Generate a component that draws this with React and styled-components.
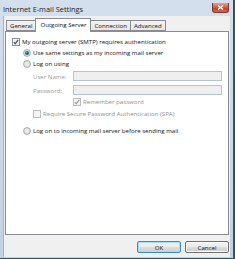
import React from "react";
import styled, { createGlobalStyle } from "styled-components";

const GlobalStyle = createGlobalStyle`
  html, body {
    margin: 0;
    padding: 0;
    background: #1d5c70;
  }
  body {
    width: 235px;
    height: 259px;
    overflow: hidden;
    font-family: "Open Sans", "Noto Sans", sans-serif;
  }
`;

const Window = styled.div`
  width: 233px;
  height: 258px;
  box-sizing: border-box;
  display: flex;
  flex-direction: column;
  background: linear-gradient(#d3dfec, #c3d2e3);
  padding: 0 3px 1px 4px;
`;

const TitleBar = styled.div`
  height: 16px;
  flex-shrink: 0;
  display: flex;
  align-items: center;
  justify-content: space-between;
  margin-left: -1px;
`;

const Title = styled.div`
  font-size: 7.4px;
  color: #1e1e1e;
  padding-top: 1px;
`;

const CloseBtn = styled.div`
  width: 17px;
  height: 10px;
  margin-right: 1px;
  margin-top: -1px;
  border: 1px solid #7a3a32;
  border-top: none;
  border-radius: 0 0 3px 3px;
  box-sizing: border-box;
  background: linear-gradient(#e3a393, #cc5a44 50%, #c13a22 51%, #d0674e);
  display: flex;
  align-items: center;
  justify-content: center;
`;

const Client = styled.div`
  flex: 1;
  background: #f0f0f0;
  display: flex;
  flex-direction: column;
  padding: 2px 1px 0 1px;
  border-left: 1px solid #a9b4c0;
  margin-left: -1px;
`;

const TabRow = styled.div`
  display: flex;
  align-items: flex-end;
  height: 13px;
  padding-left: 1px;
  position: relative;
  z-index: 1;
`;

const Tab = styled.div`
  height: ${(p) => (p.$active ? "14px" : "11px")};
  box-sizing: border-box;
  padding: 0 ${(p) => (p.$active ? "4px" : "3px")};
  margin: 0 ${(p) => (p.$active ? "-1px" : "0")};
  margin-bottom: ${(p) => (p.$active ? "-1px" : "0")};
  border: 1px solid #898c95;
  border-bottom: ${(p) => (p.$active ? "none" : "1px solid #898c95")};
  border-left: ${(p) => (p.$noLeft ? "none" : "1px solid #898c95")};
  background: ${(p) =>
    p.$active ? "#ffffff" : "linear-gradient(#f3f3f3, #e7e7e7)"};
  font-size: 6.1px;
  color: #111;
  display: flex;
  align-items: center;
  white-space: nowrap;
  position: relative;
  z-index: ${(p) => (p.$active ? 2 : 0)};
  padding-bottom: ${(p) => (p.$active ? "2px" : "0")};
`;

const Panel = styled.div`
  height: 204px;
  box-sizing: border-box;
  border: 1px solid #898c95;
  background: #ffffff;
  display: flex;
  flex-direction: column;
  padding: 5px 6px 0 6px;
`;

const Row = styled.div`
  display: flex;
  align-items: center;
  height: ${(p) => p.$h || 9}px;
  margin-top: ${(p) => p.$top || 0}px;
  margin-left: ${(p) => p.$indent || 0}px;
  font-size: 6.1px;
  color: ${(p) => (p.$disabled ? "#8f8f8f" : "#141414")};
  white-space: nowrap;
`;

const Mark = styled.svg`
  flex-shrink: 0;
  margin-right: 2px;
`;

const FieldLabel = styled.div`
  width: 40px;
  color: #9a9a9a;
`;

const Field = styled.div`
  width: 150px;
  height: 10px;
  box-sizing: border-box;
  border: 1px solid #b3c4d8;
  background: #efefef;
`;

const ButtonRow = styled.div`
  display: flex;
  justify-content: flex-end;
  gap: 4px;
  margin-top: 6px;
`;

const Button = styled.div`
  width: 44px;
  height: 12px;
  box-sizing: border-box;
  border: 1px solid ${(p) => (p.$default ? "#3a8fc6" : "#707070")};
  border-radius: 2px;
  background: linear-gradient(#f2f2f2, #ebebeb 50%, #dddddd 51%, #cfcfcf);
  box-shadow: inset 0 0 0 1px ${(p) => (p.$default ? "#a7dcf5" : "#fbfbfb")};
  font-size: 6.1px;
  color: #111;
  display: flex;
  align-items: center;
  justify-content: center;
`;

const CheckBox = ({ checked, disabled }) => (
  <Mark width="8" height="8" viewBox="0 0 8 8">
    <rect
      x="0.5"
      y="0.5"
      width="7"
      height="7"
      fill={disabled ? "#f4f4f4" : "#ffffff"}
      stroke={disabled ? "#bdbdbd" : "#8e8f8f"}
    />
    <rect
      x="1.5"
      y="1.5"
      width="5"
      height="5"
      fill={disabled ? "#f4f4f4" : "#e6e9ee"}
    />
    {checked && (
      <path
        d="M1.8 4.2 L3.2 5.8 L6.2 1.8"
        fill="none"
        stroke={disabled ? "#9a9a9a" : "#2b4d8c"}
        strokeWidth="1.1"
      />
    )}
  </Mark>
);

const Radio = ({ checked }) => (
  <Mark width="8" height="8" viewBox="0 0 8 8">
    <circle cx="4" cy="4" r="3.4" fill="#e8ebee" stroke="#8e8f8f" strokeWidth="0.8" />
    {checked && <circle cx="4" cy="4" r="2" fill="#1b5f80" />}
    {checked && <circle cx="3.5" cy="3.4" r="0.8" fill="#5fc0e0" />}
  </Mark>
);

export default function App() {
  return (
    <>
      <GlobalStyle />
      <Window>
        <TitleBar>
          <Title>Internet E-mail Settings</Title>
          <CloseBtn>
            <svg width="7" height="5" viewBox="0 0 7 5">
              <path d="M1 0.5 L6 4.5 M6 0.5 L1 4.5" stroke="#fff" strokeWidth="1.3" />
            </svg>
          </CloseBtn>
        </TitleBar>
        <Client>
          <TabRow>
            <Tab>General</Tab>
            <Tab $active>Outgoing Server</Tab>
            <Tab>Connection</Tab>
            <Tab $noLeft>Advanced</Tab>
          </TabRow>
          <Panel>
            <Row $h={9}>
              <CheckBox checked />
              My outgoing server (SMTP) requires authentication
            </Row>
            <Row $h={9} $top={2} $indent={11}>
              <Radio checked />
              Use same settings as my incoming mail server
            </Row>
            <Row $h={9} $top={2} $indent={11}>
              <Radio />
              Log on using
            </Row>
            <Row $h={10} $top={3} $indent={21}>
              <FieldLabel>User Name:</FieldLabel>
              <Field />
            </Row>
            <Row $h={10} $top={4} $indent={21}>
              <FieldLabel>Password:</FieldLabel>
              <Field />
            </Row>
            <Row $h={9} $top={2} $indent={61} $disabled>
              <CheckBox checked disabled />
              Remember password
            </Row>
            <Row $h={9} $top={3} $indent={21} $disabled>
              <CheckBox disabled />
              Require Secure Password Authentication (SPA)
            </Row>
            <Row $h={9} $top={8} $indent={11}>
              <Radio />
              Log on to incoming mail server before sending mail
            </Row>
          </Panel>
          <ButtonRow>
            <Button $default>OK</Button>
            <Button>Cancel</Button>
          </ButtonRow>
        </Client>
      </Window>
    </>
  );
}
